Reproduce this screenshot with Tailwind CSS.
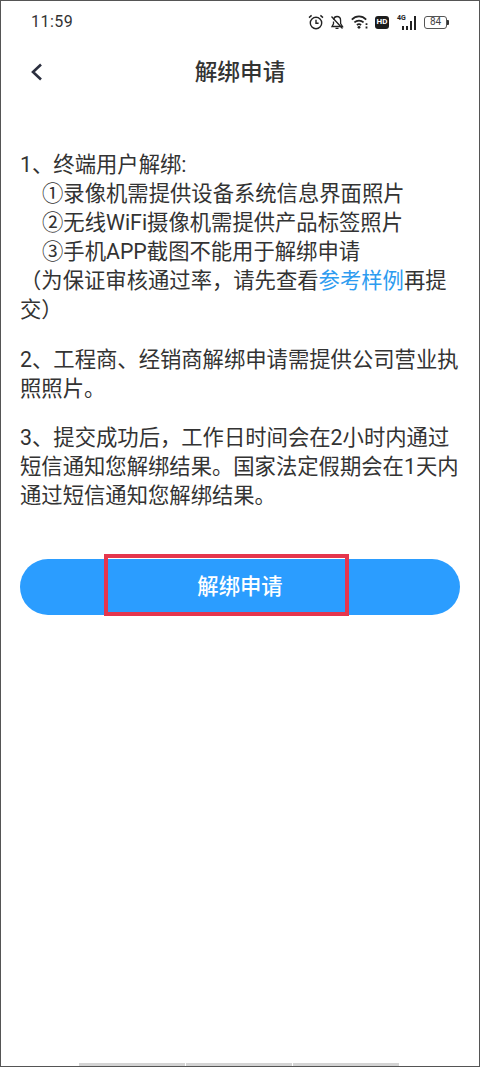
<!DOCTYPE html>
<html lang="zh">
<head>
  <meta charset="UTF-8">
  <meta name="viewport" content="width=device-width, initial-scale=1.0">
  <title>解绑申请</title>
  <script src="https://cdn.jsdelivr.net/npm/@tailwindcss/browser@4"></script>
</head>
<body class="bg-white">
  <div class="relative w-[480px] h-[1067px] overflow-hidden bg-white border border-[#555] font-['Roboto','Noto_Sans_CJK_SC',sans-serif] text-[#333]">

    <!-- status bar -->
    <div class="flex items-center justify-between h-[42px] pl-[30px] pr-[30px] text-[#2a2a2a]">
      <span class="text-[16px] tracking-[0.5px] text-[#333]">11:59</span>
      <div class="flex items-center">
        <!-- alarm -->
        <svg class="w-[16px] h-[16px] mr-[6px]" viewBox="0 0 16 16" fill="none" stroke="#222" stroke-width="1.4">
          <circle cx="8" cy="9" r="5.7"/>
          <path d="M8 5.8V9.2H10.6M1 3.6L3.6 1.4M15 3.6L12.4 1.4"/>
        </svg>
        <!-- muted bell -->
        <svg class="w-[14px] h-[15px] mr-[7px]" viewBox="0 0 14 15" fill="none" stroke="#222" stroke-width="1.3">
          <path d="M3.5 4.5C4 2.5 5.5 1.5 7 1.5C9.5 1.5 10.6 3.4 10.6 5.5V8.5L12.5 11.5H2L3.5 8.8V6.5"/>
          <path d="M5.5 13.4H8.5M1.5 1.5L12.5 13.5"/>
        </svg>
        <!-- wifi -->
        <svg class="w-[18px] h-[14px] mr-[6px]" viewBox="0 0 18 14" fill="none" stroke="#222" stroke-width="1.7">
          <path d="M0.8 4.6C5 0.4 11 0.4 15.2 4.6M3.4 7.4C6 4.9 10 4.9 12.6 7.4M5.9 10C7.2 9 8.8 9 10.1 10"/>
          <circle cx="8" cy="12.3" r="1.4" fill="#222" stroke="none"/>
          <path d="M15.5 8.2V10M15.5 11.6V13.4" stroke-width="1.8"/>
        </svg>
        <!-- HD -->
        <div class="flex items-center justify-center w-[14px] h-[13px] mr-[8px] rounded-[3px] bg-[#1c1c1c] text-white text-[8px] font-bold leading-none">HD</div>
        <!-- 4G signal -->
        <div class="relative w-[19px] h-[15px] mr-[8px]">
          <span class="absolute left-0 top-[-1px] text-[7px] font-bold leading-[8px] text-[#222]">4G</span>
          <div class="absolute right-0 bottom-0 flex items-end gap-[1.5px]">
            <div class="w-[2.5px] h-[4px] bg-[#222]"></div>
            <div class="w-[2.5px] h-[4px] bg-[#222]"></div>
            <div class="w-[2.5px] h-[9px] bg-[#222]"></div>
            <div class="w-[2.5px] h-[14px] bg-[#222]"></div>
          </div>
        </div>
        <!-- battery -->
        <div class="flex items-center">
          <div class="flex items-center justify-center w-[23px] h-[13px] rounded-[3px] border border-[#555] text-[10px] leading-none text-[#444]">84</div>
          <div class="w-[2px] h-[5px] rounded-r-[1px] bg-[#333]"></div>
        </div>
      </div>
    </div>

    <!-- nav -->
    <div class="relative flex items-center justify-center h-[58px]">
      <svg class="absolute left-[29px] top-[20px] w-[13px] h-[18px]" viewBox="0 0 13 18" fill="none" stroke="#2b2f3f" stroke-width="2.6">
        <path d="M11 1.5L3 9L11 16.5"/>
      </svg>
      <h1 class="pt-[2px] text-[22.67px] font-medium leading-none text-[#333]">解绑申请</h1>
    </div>

    <!-- content -->
    <div class="mt-[49px] pl-[19px] pr-[19px] text-[21.33px] leading-[29px] text-[#333]">
      <p>1、终端用户解绑:</p>
      <p class="pl-[22px]">①录像机需提供设备系统信息界面照片</p>
      <p class="pl-[22px]">②无线WiFi摄像机需提供产品标签照片</p>
      <p class="pl-[22px]">③手机APP截图不能用于解绑申请</p>
      <p>（为保证审核通过率，请先查看<span class="text-[#2d9cf0]">参考样例</span>再提交）</p>
      <p class="mt-[21px]">2、工程商、经销商解绑申请需提供公司营业执照照片。</p>
      <p class="mt-[20px]">3、提交成功后，工作日时间会在2小时内通过短信通知您解绑结果。国家法定假期会在1天内通过短信通知您解绑结果。</p>
    </div>

    <!-- button -->
    <div class="relative mx-[19px] mt-[49px]">
      <button class="flex items-center justify-center w-[440px] h-[56px] rounded-[28px] bg-[#2b9dff] text-white text-[21.33px] font-medium">解绑申请</button>
      <div class="absolute left-[84px] top-[-5px] w-[245px] h-[62px] border-[4px] border-[#e5364d]"></div>
    </div>

    <!-- bars cut off at the bottom -->
    <div class="absolute left-[78px] bottom-0 flex gap-[1px]">
      <div class="w-[106px] h-[3px] bg-[#d4d4d4]"></div>
      <div class="w-[106px] h-[3px] bg-[#d4d4d4]"></div>
      <div class="w-[106px] h-[3px] bg-[#d4d4d4]"></div>
    </div>
  </div>
</body>
</html>
